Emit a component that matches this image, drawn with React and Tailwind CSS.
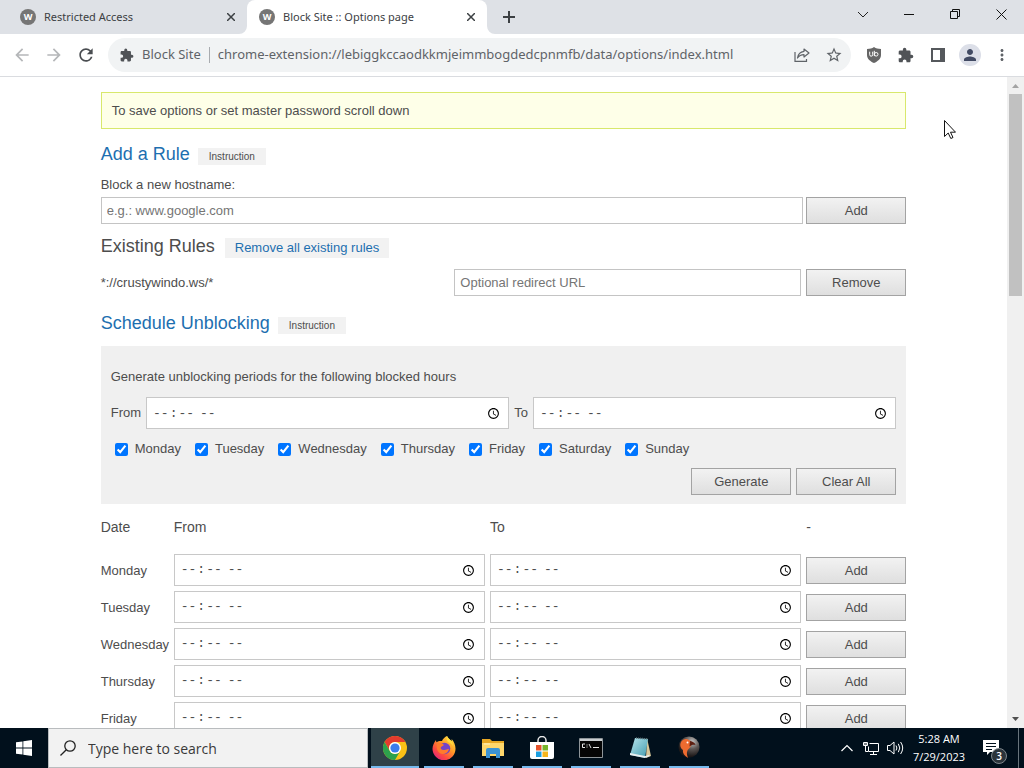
import { MdArrowBack, MdArrowForward, MdMoreVert, MdPerson, MdRefresh, MdStarBorder } from 'react-icons/md'

const DAYS = ['Monday', 'Tuesday', 'Wednesday', 'Thursday', 'Friday', 'Saturday', 'Sunday']
const SCHEDULE_DAYS = ['Monday', 'Tuesday', 'Wednesday', 'Thursday', 'Friday']

const TASKS = [
  { name: 'Google Chrome', Icon: ChromeIcon, active: true },
  { name: 'Firefox', Icon: FirefoxIcon },
  { name: 'File Explorer', Icon: ExplorerIcon },
  { name: 'Microsoft Store', Icon: StoreIcon },
  { name: 'Command Prompt', Icon: CmdIcon },
  { name: 'Notepad', Icon: NotepadIcon },
  { name: 'Bird', Icon: BirdIcon },
]

export default function App() {
  return (
    <div className="relative flex h-screen flex-col overflow-hidden bg-white">
      <TabStrip />
      <Toolbar />
      <div className="flex min-h-0 flex-1">
        <main className="min-w-0 flex-1 overflow-hidden">
          <OptionsPage />
        </main>
        <Scrollbar />
      </div>
      <Taskbar />
      <Cursor />
    </div>
  )
}

function TabStrip() {
  return (
    <header className="flex h-[34px] shrink-0 bg-[#dee1e6] font-['Noto_Sans',sans-serif] text-[#3c4043]">
      <Tab title="Restricted Access" />
      <Tab title="Block Site :: Options page" active />
      <button type="button" aria-label="New tab" className="grid w-11 place-items-center">
        <svg width="14" height="14" viewBox="0 0 14 14" stroke="#3c4043" strokeWidth="2">
          <path d="M7 1v12M1 7h12" />
        </svg>
      </button>
      <div className="ml-auto flex h-7">
        <button type="button" aria-label="Search tabs" className="grid w-[46px] place-items-center">
          <svg width="12" height="12" viewBox="0 0 12 12" fill="none" stroke="#222">
            <path d="M1 4l5 5 5-5" />
          </svg>
        </button>
        <button type="button" aria-label="Minimize" className="grid w-[46px] place-items-center">
          <svg width="10" height="10" viewBox="0 0 10 10" stroke="#111">
            <path d="M0 5.500h10" />
          </svg>
        </button>
        <button type="button" aria-label="Restore" className="grid w-[46px] place-items-center">
          <svg width="10" height="10" viewBox="0 0 10 10" fill="none" stroke="#111">
            <path d="M.5 2.500h7v7h-7zM2.500 2.500v-2h7v7h-2" />
          </svg>
        </button>
        <button type="button" aria-label="Close window" className="grid w-[46px] place-items-center">
          <svg width="11" height="11" viewBox="0 0 11 11" stroke="#111">
            <path d="M.5.500l10 10M10.500.500l-10 10" />
          </svg>
        </button>
      </div>
    </header>
  )
}

function Tab({ title, active }) {
  return (
    <div
      className={`relative flex items-center pr-2 ${
        active ? 'w-60 rounded-t-lg bg-white pl-3' : 'w-[247px] pl-5'
      }`}
    >
      <span className="grid size-4 place-items-center rounded-full bg-[#757575] text-[9px] font-bold text-white">
        W
      </span>
      <span className="ml-2 flex-1 whitespace-nowrap text-[11px] leading-4">{title}</span>
      <button type="button" aria-label={`Close ${title}`} className="grid size-4 place-items-center">
        <svg width="8" height="8" viewBox="0 0 8 8" stroke="#3c4043" strokeWidth="1.500">
          <path d="M0 0l8 8M8 0L0 8" />
        </svg>
      </button>
      {active && (
        <>
          <svg className="absolute bottom-0 -left-2" width="8" height="8" fill="#fff">
            <path d="M8 0v8H0a8 8 0 0 0 8-8z" />
          </svg>
          <svg className="absolute -right-2 bottom-0" width="8" height="8" fill="#fff">
            <path d="M0 0v8h8a8 8 0 0 1-8-8z" />
          </svg>
        </>
      )}
    </div>
  )
}

function Toolbar() {
  return (
    <div className="flex h-[43px] shrink-0 items-center border-b border-[#dadce0] font-['Noto_Sans',sans-serif]">
      <div className="flex w-[108px] justify-between pr-3 pl-3">
        <button type="button" aria-label="Back" className="text-[#b5b7b9]">
          <MdArrowBack size={20} />
        </button>
        <button type="button" aria-label="Forward" className="text-[#b5b7b9]">
          <MdArrowForward size={20} />
        </button>
        <button type="button" aria-label="Reload" className="text-[#4a4d51]">
          <MdRefresh size={20} />
        </button>
      </div>
      <div className="flex h-[34px] flex-1 items-center rounded-full bg-[#f1f3f4] pr-2 pl-3 text-[13px] text-[#5f6368]">
        <PuzzleIcon size={14} />
        <span className="ml-2 whitespace-nowrap">Block Site</span>
        <span className="mx-2 h-4 w-px bg-[#a8abaf]" />
        <input
          aria-label="Address"
          className="min-w-0 flex-1 outline-none"
          defaultValue="chrome-extension://lebiggkccaodkkmjeimmbogdedcpnmfb/data/options/index.html"
        />
        <button type="button" aria-label="Share" className="mr-[15px]">
          <svg width="16" height="16" viewBox="0 0 16 16" fill="none" stroke="#5f6368" strokeWidth="1.200">
            <path d="M1 5v9.400h11.500V12" />
            <path d="M10 2l5 4-5 4V7.700C7 7.700 5 8.800 3.500 11 4 7.500 6 4.800 10 4.300z" strokeLinejoin="round" />
          </svg>
        </button>
        <button type="button" aria-label="Bookmark">
          <MdStarBorder size={18} />
        </button>
      </div>
      <div className="flex items-center pr-[13px] pl-[15px] text-[#5f6368]">
        <button type="button" aria-label="uBlock Origin">
          <svg width="16" height="16" viewBox="0 0 16 16">
            <path d="M8 0c2 1.400 4 1.900 7 2v6c0 4-3.500 6.500-7 8-3.500-1.500-7-4-7-8V2c3-.1 5-.6 7-2z" fill="#666" />
            <path d="M3.700 4.700v3a1.500 1.500 0 0 0 3 0v-3M8.300 3.800v5.300" fill="none" stroke="#fff" />
            <circle cx="10.200" cy="7.300" r="1.800" fill="none" stroke="#fff" />
          </svg>
        </button>
        <button type="button" aria-label="Extensions" className="ml-4">
          <PuzzleIcon size={16} />
        </button>
        <button type="button" aria-label="Side panel" className="ml-[17px]">
          <svg width="14" height="14" viewBox="0 0 14 14">
            <path d="M0 0h14v14H0zM2 2v10h7V2z" fill="#55585c" fillRule="evenodd" />
          </svg>
        </button>
        <button type="button" aria-label="Profile" className="ml-3.5 grid size-[22px] place-items-center rounded-full bg-[#dcdfe8] text-[#414a63]">
          <MdPerson size={18} />
        </button>
        <button type="button" aria-label="Menu" className="ml-3">
          <MdMoreVert size={18} />
        </button>
      </div>
    </div>
  )
}

function PuzzleIcon({ size }) {
  return (
    <svg width={size} height={size} viewBox="1 0 23 23" className="shrink-0" fill="#505357">
      <path d="M20.500 11H19V7c0-1.100-.9-2-2-2h-4V3.500a2.500 2.500 0 0 0-5 0V5H4c-1.100 0-2 .9-2 2v3.800h1.500a2.700 2.700 0 0 1 0 5.400H2V20c0 1.100.9 2 2 2h3.800v-1.500a2.700 2.700 0 0 1 5.400 0V22H17c1.100 0 2-.9 2-2v-4h1.500a2.500 2.500 0 0 0 0-5z" />
    </svg>
  )
}

function OptionsPage() {
  return (
    <div className="mx-auto w-4/5 pt-[15px] font-['Liberation_Sans',Arial,sans-serif] text-[13px] leading-4 text-[#4d4d4d]">
      <p className="border border-[#d8e86c] bg-[#feffe8] px-2.5 py-[9px] leading-[17px]">
        To save options or set master password scroll down
      </p>

      <SectionHeading title="Add a Rule" className="mt-[13px]" />
      <label htmlFor="hostname" className="mt-[11px] block">
        Block a new hostname:
      </label>
      <div className="mt-1 flex gap-[3px]">
        <TextField id="hostname" placeholder="e.g.: www.google.com" className="flex-1" />
        <GrayButton>Add</GrayButton>
      </div>

      <div className="mt-2.5 flex h-6 items-center gap-2.5">
        <h2 className="text-[18px] leading-6">Existing Rules</h2>
        <a href="#remove-all" className="mt-1 bg-[#f2f2f2] px-2.5 py-0.5 text-[#1d6fb0]">
          Remove all existing rules
        </a>
      </div>
      <div className="mt-[11px] flex items-center gap-[5px]">
        <span className="flex-1">*://crustywindo.ws/*</span>
        <TextField placeholder="Optional redirect URL" aria-label="Optional redirect URL" className="w-[347px]" />
        <GrayButton>Remove</GrayButton>
      </div>

      <SectionHeading title="Schedule Unblocking" className="mt-[15px]" />
      <GeneratePanel />
      <ScheduleTable />
    </div>
  )
}

function SectionHeading({ title, className }) {
  return (
    <div className={`flex h-6 items-center gap-2 ${className}`}>
      <h2 className="text-[18px] leading-6 text-[#1d6fb0]">{title}</h2>
      <button type="button" className="mt-1 bg-[#f2f2f2] px-[11px] text-[10px] leading-[17px]">
        Instruction
      </button>
    </div>
  )
}

function TextField({ className, ...props }) {
  return (
    <input
      type="text"
      className={`h-[27px] min-w-0 border border-[#c4c4c4] bg-white px-[5px] outline-none placeholder:text-[#757575] ${className}`}
      {...props}
    />
  )
}

function TimeField({ className = '', ...props }) {
  return (
    <input
      type="time"
      className={`h-8 border border-[#c8c8c8] bg-white px-[5px] pt-0.5 font-['Liberation_Mono',monospace] text-[13px] text-[#4d4d4d] outline-none ${className}`}
      {...props}
    />
  )
}

function GrayButton({ children }) {
  return (
    <button
      type="button"
      className="h-[27px] w-[100px] shrink-0 border border-[#a3a3a3] bg-linear-to-b from-[#f2f2f2] to-[#dfdfdf]"
    >
      {children}
    </button>
  )
}

function GeneratePanel() {
  return (
    <section className="mt-[11px] bg-[#f0f0f0] px-2.5 pt-[23px] pb-[9px]">
      <p>Generate unblocking periods for the following blocked hours</p>
      <div className="mt-3 flex items-center gap-[5px]">
        <label htmlFor="gen-from">From</label>
        <TimeField id="gen-from" className="min-w-0 flex-1" />
        <label htmlFor="gen-to">To</label>
        <TimeField id="gen-to" className="min-w-0 flex-1" />
      </div>
      <div className="mt-3 flex gap-3.5 pl-1">
        {DAYS.map((day) => (
          <label key={day} className="flex items-center gap-[7px]">
            <input type="checkbox" defaultChecked className="size-[13px]" />
            {day}
          </label>
        ))}
      </div>
      <div className="mt-[11px] flex justify-end gap-[5px]">
        <GrayButton>Generate</GrayButton>
        <GrayButton>Clear All</GrayButton>
      </div>
    </section>
  )
}

function ScheduleTable() {
  return (
    <table className="w-full table-fixed">
      <thead>
        <tr className="h-[47px] text-left text-[14px]">
          <th className="w-[73px] pb-0.5 font-normal">Date</th>
          <th className="pb-0.5 font-normal">From</th>
          <th className="pb-0.5 font-normal">To</th>
          <th className="w-[100px] pb-0.5 font-normal">-</th>
        </tr>
      </thead>
      <tbody>
        {SCHEDULE_DAYS.map((day) => (
          <tr key={day} className="h-[37px]">
            <td className="pt-0.5">{day}</td>
            <td className="pr-[5px]">
              <TimeField aria-label={`${day} from`} className="block w-full" />
            </td>
            <td className="pr-[5px]">
              <TimeField aria-label={`${day} to`} className="block w-full" />
            </td>
            <td className="pt-0.5">
              <GrayButton>Add</GrayButton>
            </td>
          </tr>
        ))}
      </tbody>
    </table>
  )
}

function Scrollbar() {
  return (
    <div className="flex w-[17px] shrink-0 flex-col items-center bg-[#f0f0f0]">
      <svg width="17" height="17" viewBox="0 0 17 17" fill="#a3a3a3">
        <path d="M5 11l3.500-4 3.500 4z" />
      </svg>
      <div className="h-[202px] w-[13px] bg-[#c1c1c1]" />
      <svg className="mt-auto" width="17" height="17" viewBox="0 0 17 17" fill="#505050">
        <path d="M5 6l3.500 4L12 6z" />
      </svg>
    </div>
  )
}

function Taskbar() {
  return (
    <footer className="flex h-10 shrink-0 bg-[#01101c] font-['Open_Sans',sans-serif] text-white">
      <button type="button" aria-label="Start" className="grid w-12 place-items-center">
        <svg width="16" height="16" viewBox="0 0 16 16" fill="#fff">
          <path d="M0 2.300l6.500-.9v6.200H0zM7.300 1.300L16 0v7.600H7.300zM0 8.400h6.500v6.200L0 13.700zM7.300 8.400H16V16l-8.700-1.200z" />
        </svg>
      </button>
      <label className="flex w-80 items-center border border-[#b9bcbe] bg-[#f2f2f2] pl-[11px]">
        <svg width="16" height="16" viewBox="0 0 16 16" fill="none" stroke="#222" strokeWidth="1.300">
          <circle cx="10" cy="6" r="5.200" />
          <path d="M6.300 9.700L.5 15.500" />
        </svg>
        <input
          aria-label="Search"
          placeholder="Type here to search"
          className="ml-3 min-w-0 flex-1 text-[14px] outline-none placeholder:text-[#3a3a3a]"
        />
      </label>
      <nav className="ml-[3px] flex gap-[9px]">
        {TASKS.map(({ name, Icon, active }) => (
          <button
            key={name}
            type="button"
            aria-label={name}
            className={`grid place-items-center border-b-2 border-[#76b9ed] pt-0.5 ${
              active ? '-mr-1 w-12 bg-[#2f4148]' : 'w-10'
            }`}
          >
            <Icon />
          </button>
        ))}
      </nav>
      <div className="ml-auto flex items-center">
        <button type="button" aria-label="Show hidden icons">
          <svg width="12" height="8" viewBox="0 0 12 8" fill="none" stroke="#fff" strokeWidth="1.200">
            <path d="M.5 7L6 1.500 11.500 7" />
          </svg>
        </button>
        <svg className="ml-2.5" width="16" height="15" viewBox="0 0 16 15" fill="none" stroke="#fff">
          <path d="M6.500 2.500h9v8h-10v-5M10.500 10.500v3M7 13.500h7M.5 1.500h4v3h-4zM2.500 4.500v6H5" />
          <path d="M1 3h3" />
        </svg>
        <svg className="ml-2" width="17" height="16" viewBox="0 0 17 16" fill="none" stroke="#fff">
          <path d="M.5 5.500H3l4-3.500v12L3 10.500H.5z" />
          <path d="M9 5.500q1.800 2.500 0 5M11.300 3.800q3 4.200 0 8.400M13.600 2q4.200 6 0 12" />
        </svg>
        <div className="ml-[3px] w-[64px] text-center text-[11px] leading-[18px]">
          <div>5:28 AM</div>
          <div>7/29/2023</div>
        </div>
        <button type="button" aria-label="Notifications" className="relative ml-3 h-10 w-6">
          <svg className="absolute top-3 left-0" width="16" height="15" viewBox="0 0 16 15">
            <path d="M0 0h16v12H7l-3 3v-3H0z" fill="#fff" />
            <path d="M3 3.500h10M3 6.500h10M3 9.500h6" stroke="#01101c" />
          </svg>
          <span className="absolute top-5 left-2 grid size-4 place-items-center rounded-full border border-[#7e868c] bg-[#2b343b] text-[10px] leading-none font-semibold">
            3
          </span>
        </button>
        <div className="ml-[11px] h-10 w-1.5 border-l border-[#68747c]" />
      </div>
    </footer>
  )
}

function ChromeIcon() {
  return (
    <svg width="24" height="24" viewBox="0 0 24 24">
      <circle cx="12" cy="12" r="12" fill="#fbc116" />
      <path d="M1.600 6A12 12 0 0 1 22.400 6H12a6 6 0 0 0-5.200 9z" fill="#e33b2e" />
      <path d="M1.600 6A12 12 0 0 0 12 24l5.200-9a6 6 0 0 1-10.400 0z" fill="#2da14c" />
      <circle cx="12" cy="12" r="6" fill="#fff" />
      <circle cx="12" cy="12" r="4.600" fill="#3b7ded" />
    </svg>
  )
}

function FirefoxIcon() {
  return (
    <svg width="24" height="24" viewBox="0 0 24 24">
      <defs>
        <linearGradient id="fox" x1="1" y1="0" x2="0.200" y2="1">
          <stop offset="0" stopColor="#fff04a" />
          <stop offset="0.450" stopColor="#ff9a26" />
          <stop offset="0.750" stopColor="#ff4a3f" />
          <stop offset="1" stopColor="#e0247e" />
        </linearGradient>
      </defs>
      <path d="M15 0c1 2.500 3 3.500 4.500 5 .3-.7.200-1.300.1-2C22 5.500 23.500 9 23.500 12.500A11.500 11.500 0 0 1 .5 13C.5 9.500 2 6.500 4 4c0 1 .2 1.700.5 2.300C6 5 8 4.800 10 5c1-2.500 3-4 5-5z" fill="url(#fox)" />
      <circle cx="12.500" cy="12.500" r="5.800" fill="#7443c9" />
      <path d="M5 7.500c3-1 5.500-.2 7 1.500l-3 2c-1 1.500.5 3.500 3.500 3 2-.3 3-1.500 4.500-1-1 4-4 5.500-7 5-4-.7-6-5-5-10.500z" fill="#ff7b2c" />
      <path d="M15 0c1 2.500 6 5 6 10-1-2-2.500-3-4-3.500-2-1-3-4-2-6.500z" fill="#ffdb3c" />
    </svg>
  )
}

function ExplorerIcon() {
  return (
    <svg width="22" height="20" viewBox="0 0 22 20">
      <path d="M0 1h8l2 2h12v15H0z" fill="#e8a824" />
      <path d="M0 5h22v13H0z" fill="#ffd76b" />
      <path d="M4 20v-8q0-2 2-2h10q2 0 2 2v8h-4v-4H8v4z" fill="#3c94d4" />
      <path d="M2 6h6" stroke="#fff4c8" />
    </svg>
  )
}

function StoreIcon() {
  return (
    <svg width="24" height="24" viewBox="0 0 24 24">
      <path d="M8 7V4.500a4 4 0 0 1 8 0V7" fill="none" stroke="#e8e8e8" strokeWidth="1.500" />
      <path d="M0 6h24v15a2 2 0 0 1-2 2H2a2 2 0 0 1-2-2z" fill="#fff" />
      <path d="M6 9h5.500v5.500H6z" fill="#e5532c" />
      <path d="M12.500 9H18v5.500h-5.500z" fill="#78b52c" />
      <path d="M6 15.500h5.500V21H6z" fill="#1c9fe0" />
      <path d="M12.500 15.500H18V21h-5.500z" fill="#f7b51b" />
    </svg>
  )
}

function CmdIcon() {
  return (
    <svg width="24" height="20" viewBox="0 0 24 20">
      <path d="M.5.500h23v19H.5z" fill="#050505" stroke="#8f9599" />
      <path d="M1 1h22v2H1z" fill="#c9cdd0" />
      <path d="M6 6H3.500v3.500H6M8 6.500v1M8 8.500v1M10 6l2 4M14 9.500h6" fill="none" stroke="#e6e6e6" />
    </svg>
  )
}

function NotepadIcon() {
  return (
    <svg width="24" height="24" viewBox="0 0 24 24">
      <defs>
        <linearGradient id="pad" x1="0" y1="0" x2="1" y2="1">
          <stop offset="0" stopColor="#b9e6ee" />
          <stop offset="1" stopColor="#3f9aad" />
        </linearGradient>
      </defs>
      <path d="M19 2l4 18-5 2z" fill="#d7c79a" />
      <path d="M7 2l13 1-3 19-15-3z" fill="url(#pad)" />
      <path d="M2 19l15 3 5-2-1-1-4 1-15-3z" fill="#e9eff0" />
      <path d="M8 2l12 1" stroke="#5d7075" strokeWidth="1.500" strokeDasharray="1 1" />
    </svg>
  )
}

function BirdIcon() {
  return (
    <svg width="22" height="24" viewBox="0 0 22 24">
      <defs>
        <radialGradient id="ball" cx="0.650" cy="0.250" r="0.700">
          <stop offset="0" stopColor="#c4c4c4" />
          <stop offset="0.500" stopColor="#5c5654" />
          <stop offset="1" stopColor="#1d1818" />
        </radialGradient>
      </defs>
      <circle cx="11" cy="11" r="10.500" fill="url(#ball)" />
      <path d="M3 6C5 2.500 9 2 12 4.500c2 2 1.500 5.500-.5 7.500-2.500 2.500-3.500 4.500-1.500 10C6 19.500 4.500 17 5 14 2.500 12.500 1.500 9 3 6z" fill="#ee6b30" />
      <path d="M12 5c3 .5 5 2 5.500 4-2-.7-4-.3-6 1.500z" fill="#5c1f12" />
      <circle cx="9.500" cy="6.500" r="1" fill="#fff" />
    </svg>
  )
}

function Cursor() {
  return (
    <svg className="pointer-events-none absolute top-[120px] left-[944px]" width="12" height="19" viewBox="0 0 12 19">
      <path d="M.5.500v16l3.700-3.500 2.600 5.500 2.200-1-2.500-5.300h5z" fill="#fff" stroke="#111" />
    </svg>
  )
}
